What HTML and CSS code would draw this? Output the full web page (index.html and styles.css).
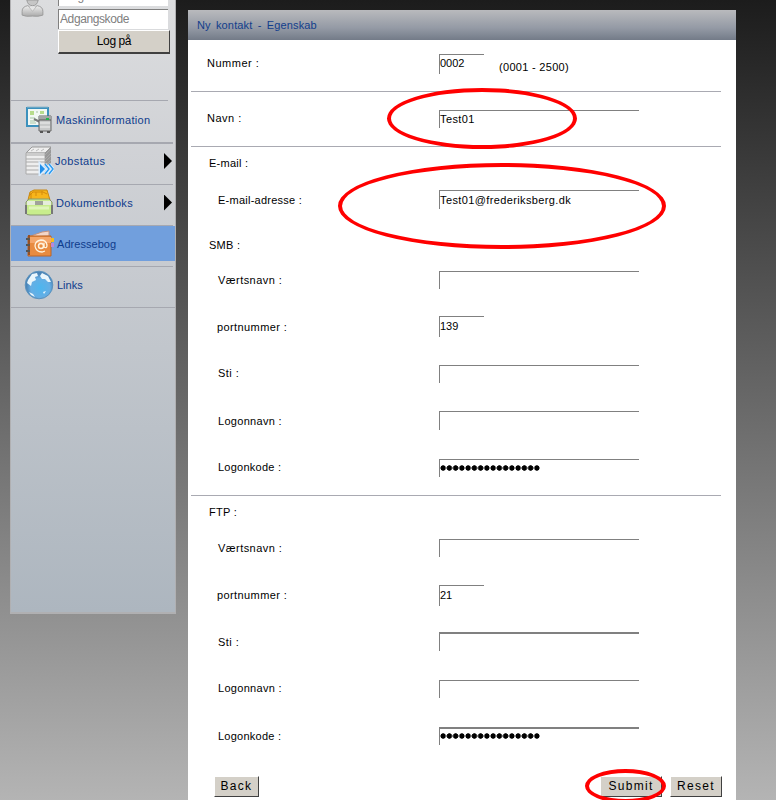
FILE: index.html
```html
<!DOCTYPE html>
<html lang="da">
<head>
<meta charset="utf-8">
<title>Ny kontakt - Egenskab</title>
<link rel="stylesheet" href="styles.css">
</head>
<body>
<div class="page">
  <aside class="sidebar">
    <form class="login">
      <svg class="avatar" width="24" height="18" viewBox="0 0 24 18">
        <defs><linearGradient id="grey" x1="0" y1="0" x2="0" y2="1"><stop offset="0" stop-color="#eee"/><stop offset="1" stop-color="#aaa"/></linearGradient></defs>
        <path d="M1 16V12Q1 7 7 6L12 9L17 6Q23 7 23 12V16Q18 18 12 17Q5 18 1 16Z" fill="url(#grey)" stroke="#999"/>
        <path d="M6 0H18Q17 6 12 6Q7 6 6 0Z" fill="#c6c6c6" stroke="#999"/>
        <path d="M8 7L12 12L16 7" fill="#e5e5e5" stroke="#aaa" stroke-width=".7"/>
      </svg>
      <div class="login-fields">
        <div class="login-input user"><span>Brugernavn</span></div>
        <div class="login-input">Adgangskode</div>
        <button class="button login-button" type="button">Log på</button>
      </div>
    </form>
    <nav class="menu">
      <a class="item first">
        <svg class="icon" width="30" height="30" viewBox="0 0 30 30">
          <path d="M3 3H24V21H3Z" fill="#f2f8f4" stroke="#3c91bd" stroke-width="2"/><path d="M3 2H24" stroke="#91b8cb"/>
          <path d="M6 6H10V10H6ZM16 6H20V9H16Z" fill="#b7dc8c"/><path d="M6 13H11M6 16H11M6 18H12M12 7H14" stroke="#a7c6a6"/>
          <path d="M10 14L16 17" stroke="#777" stroke-width="2"/>
          <path d="M15 11H27V26H15Z" fill="#c7c9c9" stroke="#666"/><path d="M15 11H27V15H15Z" fill="#a2a6a5"/><path d="M15 15H27" stroke="#555"/><path d="M22 14H25" stroke="#25b34c" stroke-width="2"/>
          <path d="M16 18H26M16 22H26" stroke="#f0f0f0"/><path d="M16 27H19M23 27H26" stroke="#555" stroke-width="2"/>
        </svg><span class="t1">Maskininformation</span>
      </a>
      <a class="item second">
        <svg class="icon" width="30" height="30" viewBox="0 0 30 30">
          <path d="M8 1H27L21 7H2Z" fill="#eee" stroke="#999"/><path d="M2 7H21V28H2Z" fill="#eee" stroke="#aaa"/><path d="M21 7L27 1V22L21 28Z" fill="#999"/>
          <path d="M2 9H21L27 3M2 13H21L27 7M2 16H21L27 10M2 20H21L27 14M2 24H21L27 18" fill="none" stroke="#aaa"/>
          <path d="M7 5L10 3M12 5L15 3M17 5L20 3" stroke="#bbb"/>
          <path d="M16 18V28L21 23ZM21 18L25 23L21 28M25 18L29 23L25 28" fill="none" stroke="#d9edff" stroke-width="3"/>
          <path d="M16 18V28L21 23Z" fill="#238fe9"/><path d="M21 18L25 23L21 28M25 18L29 23L25 28" fill="none" stroke="#299af0" stroke-width="1.4"/>
        </svg><span class="t2">Jobstatus</span><i class="arrow"></i>
      </a>
      <a class="item">
        <svg class="icon" width="30" height="30" viewBox="0 0 30 30">
          <path d="M4 12L6 4L10 2H23L26 12Z" fill="#f7b51b" stroke="#c68712"/><path d="M5 8L9 4H19L23 6M7 5V11M12 4V8M18 3V7" stroke="#d58b0c" fill="none"/>
          <path d="M2 14L5 11H25L28 14V25Q27 27 24 27H6Q2 27 2 25Z" fill="#c8ed8c" stroke="#88966f"/><path d="M3 15H27" stroke="#e5edda" stroke-width="4"/>
          <path d="M2 17V26M28 17V26" stroke="#777" stroke-width="2"/><path d="M11 13H19V17H11Z" fill="#a0a39a"/><path d="M5 20H25" stroke="#dff5ba" stroke-width="3"/>
        </svg><span class="t3">Dokumentboks</span><i class="arrow"></i>
      </a>
      <a class="item selected">
        <svg class="icon" width="30" height="30" viewBox="0 0 30 30">
          <path d="M4 8L18 3L25 2V7Z" fill="#f3d5c8" stroke="#c5927d"/><path d="M4 7H27V27H4Z" fill="#e88b40" stroke="#bc6527"/><path d="M4 8H27V14H4Z" fill="#f5a66a"/>
          <path d="M27 9H30V13H27Z" fill="#f5bb20"/><path d="M27 14H30V18H27Z" fill="#bb87d8"/>
          <path d="M5 6V26" stroke="#985124" stroke-width="2"/><path d="M2 10H6M2 16H6M2 22H6" stroke="#555" stroke-width="2"/>
          <circle cx="17" cy="17" r="2.5" fill="none" stroke="#fff4df" stroke-width="1.5"/><path d="M20 14V18Q23 20 23 16Q22 11 17 11Q11 12 11 17Q12 23 18 23L21 22" fill="none" stroke="#fff4df" stroke-width="1.3"/>
        </svg><span class="t4">Adressebog</span>
      </a>
      <a class="item last">
        <svg class="icon" width="30" height="30" viewBox="0 0 30 30">
          <defs><radialGradient id="sea" cx=".55" cy=".6"><stop offset="0" stop-color="#4db6ef"/><stop offset=".7" stop-color="#65aee4"/><stop offset="1" stop-color="#4b85b8"/></radialGradient></defs>
          <circle cx="15" cy="15" r="13.8" fill="url(#sea)" stroke="#5b92bd"/>
          <path d="M4 10L8 4L13 3L14 6L11 7L12 10L8 12L7 16L3 13ZM18 3L24 6L27 12L24 12L21 9L18 9L16 6ZM5 22L9 24L11 27L7 25ZM19 22L22 21L20 24Z" fill="#eaf6fc"/>
        </svg><span class="t5">Links</span>
      </a>
    </nav>
  </aside>

  <main class="panel">
    <h1><span>Ny kontakt - Egenskab</span></h1>
    <section class="group number">
      <div class="row"><label class="l0 w-num">Nummer :</label><div class="field short h20 d1">0002</div><span class="range">(0001 - 2500)</span></div>
    </section>
    <section class="group name">
      <div class="row"><label class="l0 w-num">Navn :</label><div class="field d2"><span class="address">Test01</span></div></div>
    </section>
    <section class="group network">
      <div class="row r37"><label class="l1 w-mail">E-mail :</label></div>
      <div class="row r45"><label class="l2 w-mail">E-mail-adresse :</label><div class="field h19"><span class="address">Test01@frederiksberg.dk</span></div></div>
      <div class="row r35"><label class="l1 w-mail">SMB :</label></div>
      <div class="row"><label class="l2 w-host">Værtsnavn :</label><div class="field d1"></div></div>
      <div class="row r46"><label class="l2 w-port">portnummer :</label><div class="field short h21 u1">139</div></div>
      <div class="row r48"><label class="l2 w-host">Sti :</label><div class="field d2"></div></div>
      <div class="row r46"><label class="l2 w-login">Logonnavn :</label><div class="field h19"></div></div>
      <div class="row r38"><label class="l2 w-mail">Logonkode :</label><div class="field d2 dots"><i></i></div></div>
    </section>
    <section class="group ftp">
      <div class="row r36"><label class="l1 w-mail">FTP :</label></div>
      <div class="row"><label class="l2 w-host">Værtsnavn :</label><div class="field d1"></div></div>
      <div class="row"><label class="l2 w-port">portnummer :</label><div class="field short h21">21</div></div>
      <div class="row r46"><label class="l2 w-host">Sti :</label><div class="field h19 thick"></div></div>
      <div class="row r48"><label class="l2 w-login">Logonnavn :</label><div class="field d2"></div></div>
      <div class="row r51"><label class="l2 w-mail">Logonkode :</label><div class="field d1 dots thick"><i></i></div></div>
    </section>
    <footer class="actions">
      <button class="button back" type="button">Back</button>
      <button class="button submit" type="button">Submit</button>
      <button class="button reset" type="button">Reset</button>
    </footer>
    <i class="ring ring-name"></i>
    <i class="ring ring-mail"></i>
    <i class="ring ring-submit"></i>
  </main>
</div>
</body>
</html>
```
FILE: styles.css
```css
* { box-sizing: border-box; }
html, body { margin: 0; height: 800px; overflow: hidden; }
body { background: linear-gradient(#1c1c1c, #b4b4b4); font: 11px/20px "Liberation Sans", Arial, sans-serif; color: #000; }
.page { display: flex; gap: 12px; height: 800px; padding-left: 10px; overflow: hidden; }
.sidebar { width: 166px; height: 614px; border: 1px solid #b0b0b2; border-top: 0; border-bottom-width: 2px; background: linear-gradient(#dcdddf, #cfd1d5 27%, #adb6bf); }
.login { display: flex; gap: 14px; height: 100px; padding-left: 10px; }
.avatar { flex: none; width: 23px; height: 17px; }
.login-fields { width: 112px; }
.login-input { width: 110px; height: 20px; padding-left: 1px; border-left: 1px solid #808080; border-top: 1px solid #808080; background: #fff; color: #808080; font-size: 12px; line-height: 18px; letter-spacing: -.4px; }
.login-input.user { height: 6px; margin-bottom: 3px; border-top: 0; overflow: hidden; }
.login-input.user span { display: block; margin-top: -13px; }
.button { display: block; padding: 0; border: 1px solid #fff; border-right-color: #404040; border-bottom-color: #404040; background: #d4d0c8; color: #000; font: 12px/17px "Liberation Sans", Arial, sans-serif; }
.login-button { width: 112px; height: 24px; margin-top: 1px; border-bottom-width: 2px; line-height: 21px; letter-spacing: -.4px; }
.item { display: flex; align-items: center; height: 41px; color: #0f3c8c; position: relative; padding: 0 0 4px 13px; font-size: 11px; }
.item::before { content: ""; position: absolute; left: 0; top: 0; width: 162px; height: 1px; background: #a6a8b0; }
.first { height: 42px; padding-bottom: 3px; }
.first::before { width: 157px; }
.second { height: 42px; }
.second::before { height: 2px; }
.icon { width: 30px; height: 30px; flex: none; margin-right: 2px; }
.selected::after { content: ""; position: absolute; left: 0; top: 1px; width: 164px; height: 35px; background: #719fdd; }
.selected svg, .selected span { position: relative; z-index: 1; }
.last { border-bottom: 1px solid #a6a8b0; height: 42px; }
.arrow { width: 8px; height: 16px; margin-left: auto; margin-right: 3px; background: #000; clip-path: polygon(0 0, 100% 50%, 0 100%); }
.t1 { letter-spacing: .3px; } .t2 { margin-left: -1px; letter-spacing: .35px; } .t3 { letter-spacing: .3px; } .t4 { letter-spacing: .05px; margin-left: 1px; } .t5 { margin-left: 1px; }
.panel { position: relative; width: 548px; height: 790px; margin-top: 10px; background: #fff; }
h1 { margin: 0; height: 30px; padding-left: 9px; background: linear-gradient(#b9babd, #949aa5 60%, #737b88); color: #123e8c; font-size: 11px; font-weight: normal; line-height: 30px; }
h1 span { letter-spacing: .15px; word-spacing: 2px; }
.group { width: 530px; margin-left: 3px; border-bottom: 1px solid #a9aab2; }
.number { height: 52px; padding-top: 13px; }
.name { height: 55px; padding-top: 16px; }
.network { height: 349px; padding-top: 6px; }
.ftp { padding-top: 6px; border: 0; }
.row { display: flex; height: 47px; }
.r35 { height: 35px; } .r36 { height: 36px; } .r37 { height: 37px; } .r38 { height: 38px; } .r45 { height: 45px; } .r46 { height: 46px; } .r48 { height: 48px; } .r51 { height: 51px; }
label { width: 248px; flex: none; white-space: nowrap; }
.l0 { padding-left: 16px; } .l1 { padding-left: 18px; } .l2 { padding-left: 27px; }
.w-num { letter-spacing: .5px; } .w-mail { letter-spacing: .25px; } .w-host { letter-spacing: .45px; } .w-login { letter-spacing: .3px; }
.w-port { padding-left: 26px; letter-spacing: .4px; }
.field { width: 200px; height: 18px; border-left: 1px solid #808080; border-top: 1px solid #808080; line-height: 16px; white-space: nowrap; }
.short { width: 45px; } .h19 { height: 19px; line-height: 18px; } .h20 { height: 20px; } .h21 { height: 21px; line-height: 18px; }
.d1 { margin-top: 1px; } .d2 { margin-top: 2px; } .u1 { margin-top: -1px; }
.thick { border-top-width: 2px; }
.dots i { display: block; width: 100px; height: 6px; margin-top: 5px; background: radial-gradient(circle, #000 2.4px, transparent 3px) 0 0 / 6.25px 6px repeat-x; }
.dots.thick i { margin-top: 4px; }
.range { margin: 4px 0 0 15px; letter-spacing: .3px; }
.address { letter-spacing: .38px; }
.actions { display: flex; margin-top: -1px; padding-left: 26px; }
.actions .button { height: 21px; letter-spacing: 1.3px; }
.back { width: 45px; margin-right: 341px; }
.submit { width: 62px; margin-right: 8px; }
.reset { width: 52px; }
.ring { position: absolute; border: 4px solid #f00; border-radius: 50%; pointer-events: none; }
.ring-name { left: 199px; top: 78px; width: 190px; height: 61px; }
.ring-mail { left: 150px; top: 153px; width: 328px; height: 86px; }
.ring-submit { left: 397px; top: 759px; width: 81px; height: 34px; }
```
